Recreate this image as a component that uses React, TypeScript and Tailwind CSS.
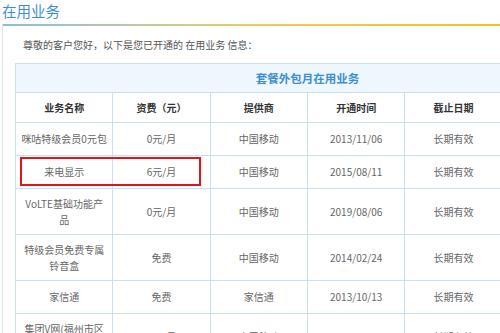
const rows = [
  { name: '咪咕特级会员0元包', fee: '0元/月', vendor: '中国移动', start: '2013/11/06', end: '长期有效', h: 'h-[33px]' },
  { name: '来电显示', fee: '6元/月', vendor: '中国移动', start: '2015/08/11', end: '长期有效', h: 'h-[33px]' },
  { name: 'VoLTE基础功能产\n品', fee: '0元/月', vendor: '中国移动', start: '2019/08/06', end: '长期有效', h: 'h-[46px]' },
  { name: '特级会员免费专属\n铃音盒', fee: '免费', vendor: '中国移动', start: '2014/02/24', end: '长期有效', h: 'h-[46px]' },
  { name: '家信通', fee: '免费', vendor: '家信通', start: '2013/10/13', end: '长期有效', h: 'h-[33px]' },
  { name: '集团V网(福州市区\n内)', fee: '0元/月', vendor: '中国移动', start: '2011/09/01', end: '长期有效', h: 'h-[46px]' },
];

const heads = ['业务名称', '资费（元）', '提供商', '开通时间', '截止日期', ''];

export default function App() {
  return (
    <div className="relative w-[500px] h-[333px] overflow-hidden bg-white text-[#666] font-['Noto_Sans_CJK_SC','Microsoft_YaHei',sans-serif]">
      <h1 className="h-[24px] pl-[2px] text-[14.5px] leading-[22px] text-[#3d8ed4]">在用业务</h1>

      <div className="ml-[2px] border-l border-[#dde3ea] min-h-[400px]">
        <div className="h-[2px] bg-gradient-to-r from-[#8bbbe0] via-[#e9cf55] to-[#f2c21b]" />
        <div className="pl-[12px] pt-[11px]">
          <p className="pl-[8px] text-[10px] leading-[16px] text-[#555]">
            尊敬的客户您好，以下是您已开通的 在用业务 信息：
          </p>

          <table className="mt-[10px] w-[585px] table-fixed border-collapse text-[10px] leading-[16px]">
            <thead>
              <tr className="h-[29px]">
                <th colSpan={6} className="border border-[#c9e0f1] bg-[#eef7fd] text-center text-[11.5px] font-bold text-[#3c8fd0]">
                  套餐外包月在用业务
                </th>
              </tr>
              <tr className="h-[30px]">
                {heads.map((h, i) => (
                  <th key={i} className="border border-[#c9e0f1] text-center font-bold text-[#333]">
                    {h}
                  </th>
                ))}
              </tr>
            </thead>
            <tbody>
              {rows.map((r) => (
                <tr key={r.name} className={r.h}>
                  <td className="border border-[#c9e0f1] px-[2px] text-center whitespace-pre-line">{r.name}</td>
                  <td className="border border-[#c9e0f1] text-center">{r.fee}</td>
                  <td className="border border-[#c9e0f1] text-center">{r.vendor}</td>
                  <td className="border border-[#c9e0f1] text-center">{r.start}</td>
                  <td className="border border-[#c9e0f1] text-center">{r.end}</td>
                  <td className="border border-[#c9e0f1] text-center"></td>
                </tr>
              ))}
            </tbody>
          </table>
        </div>
      </div>

      {/* highlight box around 来电显示 */}
      <div className="absolute left-[20px] top-[157px] w-[181px] h-[29px] border-2 border-[#e2141b]" />
    </div>
  );
}
